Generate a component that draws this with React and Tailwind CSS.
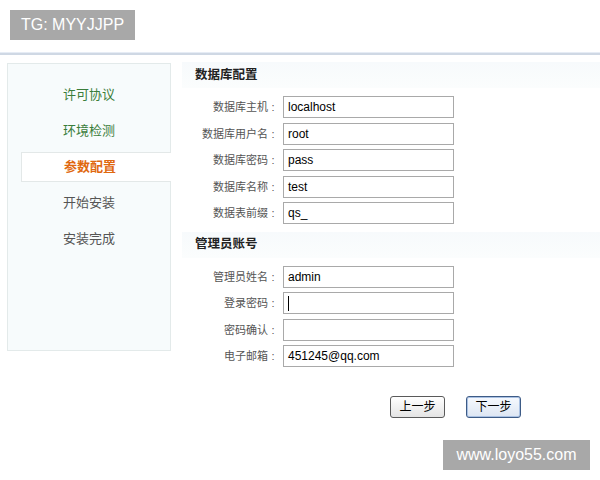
import React from "react";

const font = { fontFamily: '"Liberation Sans", "Noto Sans CJK SC", sans-serif' };

const steps = [
  { name: "许可协议", state: "done" },
  { name: "环境检测", state: "done" },
  { name: "参数配置", state: "active" },
  { name: "开始安装", state: "todo" },
  { name: "安装完成", state: "todo" },
];

const dbFields = [
  { label: "数据库主机", value: "localhost" },
  { label: "数据库用户名", value: "root" },
  { label: "数据库密码", value: "pass" },
  { label: "数据库名称", value: "test" },
  { label: "数据表前缀", value: "qs_" },
];

const adminFields = [
  { label: "管理员姓名", value: "admin" },
  { label: "登录密码", value: "", caret: true },
  { label: "密码确认", value: "" },
  { label: "电子邮箱", value: "451245@qq.com" },
];

function SectionTitle({ children }) {
  return (
    <div className="h-[26px] flex items-center pl-[13px] bg-gradient-to-b from-[#f7fafc] to-[#fbfdfd] text-[12.5px] font-bold text-[#222]">
      {children}
    </div>
  );
}

function FieldRow({ label, value, caret }) {
  return (
    <div className="h-[26.5px] flex items-center">
      <label className="w-[101px] flex justify-end text-[11px] text-[#555] pr-[5px]">
        <span>{label}</span>
        <span className="w-[10px] text-center">:</span>
      </label>
      <div className="w-[171px] h-[22px] border border-[#a9a9a9] bg-white flex items-center px-[4px] text-[12px] text-black">
        {caret ? <span className="w-px h-[15px] bg-black" /> : value}
      </div>
    </div>
  );
}

export default function App() {
  return (
    <div className="relative w-[600px] h-[480px] bg-white overflow-hidden" style={font}>
      {/* top watermark */}
      <div className="absolute left-[10px] top-[10px] w-[125px] h-[30px] bg-[#a8a8a8] text-white text-[16px] flex items-center justify-center">
        TG: MYYJJPP
      </div>

      <div className="h-[52px]" />
      <div className="h-px bg-[#e6ecf5]" />
      <div className="h-[2px] bg-[#cfd8e4]" />

      <div className="flex pt-[7px]">
        {/* sidebar */}
        <div className="ml-[7px] w-[164px] h-[288px] mt-[1px] bg-[#f7fbfc] border border-[#e3eaea] pt-[13px] flex flex-col">
          {steps.map((s) => (
            <div
              key={s.name}
              className={
                s.state === "active"
                  ? "ml-[13px] -mr-px h-[30px] my-[3px] bg-white border border-r-0 border-[#e3e8e8] flex items-center justify-center text-[13px] font-bold text-[#e0680f]"
                  : s.state === "done"
                  ? "h-[36px] flex items-center justify-center text-[13px] text-[#3a7d3a]"
                  : "h-[36px] flex items-center justify-center text-[13px] text-[#555]"
              }
            >
              <span className={s.state === "active" ? "-ml-[13px]" : ""}>{s.name}</span>
            </div>
          ))}
        </div>

        {/* main */}
        <div className="ml-[11px] flex-1">
          <SectionTitle>数据库配置</SectionTitle>
          <div className="pt-[6px]">
            {dbFields.map((f) => (
              <FieldRow key={f.label} {...f} />
            ))}
          </div>
          <div className="h-[5px]" />
          <SectionTitle>管理员账号</SectionTitle>
          <div className="pt-[6px]">
            {adminFields.map((f) => (
              <FieldRow key={f.label} {...f} />
            ))}
          </div>

          <div className="flex mt-[26px] pl-[208px] gap-[21px]">
            <button className="w-[55px] h-[22px] rounded-[3px] border border-[#5a5a5a] bg-gradient-to-b from-white to-[#e4e4e4] text-[12px] text-black">
              上一步
            </button>
            <button className="w-[55px] h-[22px] rounded-[3px] border border-[#3d5b86] bg-gradient-to-b from-[#f6f9fe] to-[#dde6f3] text-[12px] text-black shadow-[inset_0_0_0_1px_#a9c1e3]">
              下一步
            </button>
          </div>
        </div>
      </div>

      {/* bottom watermark */}
      <div className="absolute left-[443px] top-[440px] w-[147px] h-[30px] bg-[#a8a8a8] text-white text-[16px] flex items-center justify-center">
        www.loyo55.com
      </div>
    </div>
  );
}
